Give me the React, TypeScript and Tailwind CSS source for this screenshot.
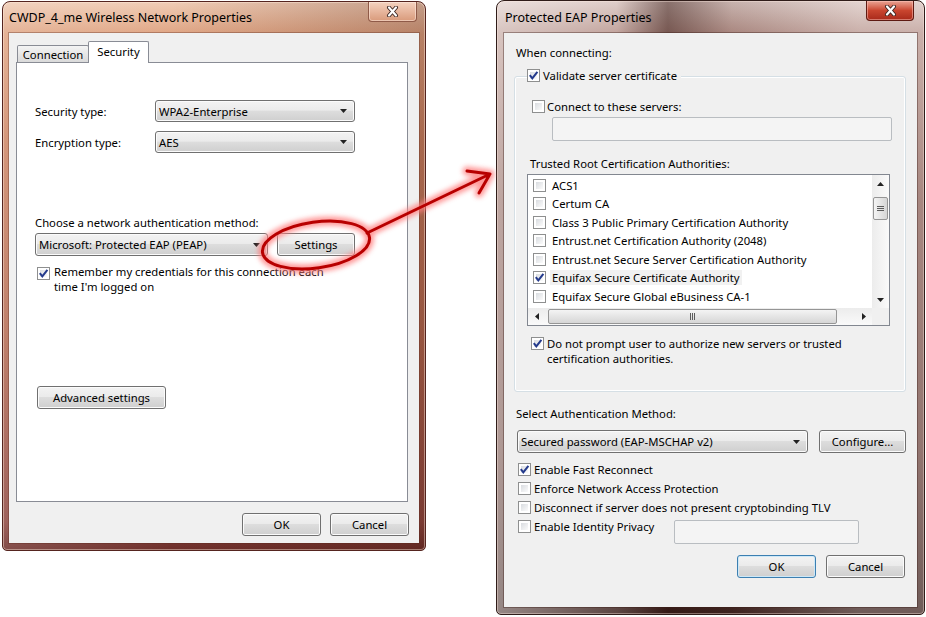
import type { ReactNode } from "react";

const face = "font-['Noto_Sans','Open_Sans',sans-serif]";
const btnFill =
  "bg-[linear-gradient(180deg,#f3f3f3_0%,#ebebeb_46%,#dddddd_50%,#cfcfcf_100%)]";

function Check({ on = false }: { on?: boolean }) {
  return (
    <span className="relative inline-block h-[13px] w-[13px] shrink-0 border border-[#8e8f8f] bg-white">
      <span className="absolute inset-[2px] bg-linear-to-br from-[#d9dce0] to-[#fbfbfb]" />
      {on && (
        <svg viewBox="0 0 11 11" className="absolute inset-0 h-[11px] w-[11px]">
          <path d="M1.8 5.2 4.3 8.4 9.4 1.8" fill="none" stroke="#243a8c" strokeWidth="2" />
        </svg>
      )}
    </span>
  );
}

function Btn({ children, className = "", primary = false }: { children: ReactNode; className?: string; primary?: boolean }) {
  return (
    <div
      className={`flex h-[23px] items-center justify-center rounded-[3px] border ${btnFill} ${
        primary
          ? "border-[#3c7fb1] shadow-[inset_0_0_0_1px_#cde8f7]"
          : "border-[#707070] shadow-[inset_0_0_0_1px_#fbfbfb]"
      } ${className}`}
    >
      {children}
    </div>
  );
}

function Arrow({ dir }: { dir: "up" | "down" | "left" | "right" }) {
  const d = {
    up: "M0 4h7L3.5 0z",
    down: "M0 0h7L3.5 4z",
    left: "M4 0v7L0 3.5z",
    right: "M0 0v7L4 3.5z",
  }[dir];
  const vert = dir === "up" || dir === "down";
  return (
    <svg width={vert ? 7 : 4} height={vert ? 4 : 7} viewBox={vert ? "0 0 7 4" : "0 0 4 7"}>
      <path d={d} fill="#222" />
    </svg>
  );
}

function Combo({ value, className = "" }: { value: string; className?: string }) {
  return (
    <div
      className={`flex items-center justify-between rounded-[3px] border border-[#707070] ${btnFill} shadow-[inset_0_0_0_1px_#fbfbfb] pl-[3px] pr-[7px] ${className}`}
    >
      <span>{value}</span>
      <Arrow dir="down" />
    </div>
  );
}

function TextBox({ className = "" }: { className?: string }) {
  return <div className={`rounded-[2px] border border-[#b9bdc1] bg-[#f4f4f4] ${className}`} />;
}

function CloseX() {
  return (
    <svg width="13" height="11" viewBox="0 0 13 11">
      <path d="M3 1.5l7 8M10 1.5l-7 8" stroke="#3b2622" strokeWidth="4" strokeLinecap="round" />
      <path d="M3 1.5l7 8M10 1.5l-7 8" stroke="#fff" strokeWidth="2.2" strokeLinecap="round" />
    </svg>
  );
}

function Grip({ vertical }: { vertical?: boolean }) {
  return (
    <div className={`flex gap-px ${vertical ? "flex-col" : "flex-row"}`}>
      {[0, 1, 2].map((i) => (
        <span key={i} className={`${vertical ? "h-px w-[7px]" : "h-[7px] w-px"} bg-[#5c5c5c]`} />
      ))}
    </div>
  );
}

const authorities: [string, boolean][] = [
  ["ACS1", false],
  ["Certum CA", false],
  ["Class 3 Public Primary Certification Authority", false],
  ["Entrust.net Certification Authority (2048)", false],
  ["Entrust.net Secure Server Certification Authority", false],
  ["Equifax Secure Certificate Authority", true],
  ["Equifax Secure Global eBusiness CA-1", false],
];

function CertList() {
  return (
    <div className="flex h-[152px] w-[363px] flex-col border border-[#828790] bg-white">
      <div className="flex flex-1 overflow-hidden">
        <div className="flex-1 pl-[5px] pt-px">
          {authorities.map(([name, on]) => (
            <div key={name} className="flex h-[18.5px] items-center gap-[4px] whitespace-nowrap">
              <Check on={on} />
              <span className={`px-[2px] ${on ? "bg-[#f1f1f1]" : ""}`}>{name}</span>
            </div>
          ))}
        </div>
        {/* vertical scrollbar */}
        <div className="flex w-[17px] flex-col bg-linear-to-r from-[#ececec] to-[#fafafa]">
          <div className="flex h-[17px] items-center justify-center">
            <Arrow dir="up" />
          </div>
          <div className="mx-px mt-[5px] flex h-[23px] items-center justify-center rounded-[2px] border border-[#959595] bg-linear-to-r from-[#f4f4f4] to-[#d6d6d6]">
            <Grip vertical />
          </div>
          <div className="flex-1" />
          <div className="flex h-[17px] items-center justify-center">
            <Arrow dir="down" />
          </div>
        </div>
      </div>
      {/* horizontal scrollbar */}
      <div className="flex h-[17px]">
        <div className="flex flex-1 items-center bg-linear-to-b from-[#ececec] to-[#fafafa]">
          <div className="flex w-[17px] justify-center">
            <Arrow dir="left" />
          </div>
          <div className="ml-[3px] flex h-[15px] w-[289px] items-center justify-center rounded-[2px] border border-[#959595] bg-linear-to-b from-[#f4f4f4] to-[#d6d6d6]">
            <Grip />
          </div>
          <div className="flex-1" />
          <div className="flex w-[17px] justify-center">
            <Arrow dir="right" />
          </div>
        </div>
        <div className="w-[17px] bg-[#f0f0f0]" />
      </div>
    </div>
  );
}

function WirelessProperties() {
  return (
    <div className="mt-px flex h-[550px] w-[424px] flex-col rounded-t-[8px] rounded-b-[5px] border border-[#55241f] bg-[linear-gradient(90deg,rgba(255,255,255,0.15)_0%,transparent_40%,rgba(60,20,10,0.25)_100%),linear-gradient(180deg,#f0ccb5_0px,#e0a584_32px,#cc8464_140px,#b46a52_330px,#8e4740_520px,#6a2c28_550px)] px-[6px] pb-[7px] shadow-[inset_0_0_0_1px_rgba(255,235,220,0.45)]">
      <div className="flex h-[31px] items-start justify-between">
        <span className="pt-[7px] text-[12.5px] leading-[17px]">CWDP_4_me Wireless Network Properties</span>
        <div className="mr-[2px] flex h-[20px] w-[49px] items-center justify-center rounded-b-[4px] border border-t-0 border-[#8f5a48] bg-linear-to-b from-[#f4d2bf] to-[#d99a7b] shadow-[inset_0_0_0_1px_rgba(255,240,230,0.5)]">
          <CloseX />
        </div>
      </div>

      <div className="flex flex-1 flex-col bg-[#f0f0f0] pl-[7px] pt-[8px] shadow-[0_0_0_1px_rgba(90,40,30,0.35)]">
        {/* tab strip */}
        <div className="flex h-[21px] items-end">
          <div className="ml-px flex h-[17px] w-[72px] items-center justify-center rounded-t-[2px] border border-b-0 border-[#898c95] bg-linear-to-b from-[#f4f4f4] to-[#dadada]">
            Connection
          </div>
          <div className="relative z-10 -mb-px -ml-px flex h-[22px] w-[61px] justify-center rounded-t-[2px] border border-b-0 border-[#898c95] bg-white pt-[2px]">
            Security
          </div>
        </div>

        <div className="h-[440px] w-[392px] border border-[#898c95] bg-white">
          <div className="flex flex-col pl-[18px] pt-[37px]">
            <div className="flex h-[22px] items-center">
              <span className="w-[120px]">Security type:</span>
              <Combo value="WPA2-Enterprise" className="h-[22px] w-[200px]" />
            </div>
            <div className="mt-[9px] flex h-[22px] items-center">
              <span className="w-[120px]">Encryption type:</span>
              <Combo value="AES" className="h-[22px] w-[200px]" />
            </div>

            <span className="mt-[62px]">Choose a network authentication method:</span>
            <div className="mt-[3px] flex gap-[9px]">
              <Combo value="Microsoft: Protected EAP (PEAP)" className="h-[23px] w-[233px]" />
              <Btn className="w-[78px]">Settings</Btn>
            </div>

            <div className="ml-[2px] mt-[8px] flex items-start gap-[4px]">
              <span className="mt-[3px]">
                <Check on />
              </span>
              <span>
                Remember my credentials for this connection each
                <br />
                time I'm logged on
              </span>
            </div>

            <Btn className="ml-[2px] mt-[92px] w-[129px]">Advanced settings</Btn>
          </div>
        </div>

        <div className="mt-[11px] flex justify-end gap-[9px] pr-[10px]">
          <Btn className="w-[79px]">OK</Btn>
          <Btn className="w-[79px]">Cancel</Btn>
        </div>
      </div>
    </div>
  );
}

function PeapProperties() {
  return (
    <div className="flex h-[615px] w-[429px] flex-col rounded-t-[8px] rounded-b-[5px] border border-[#2f1c19] bg-[linear-gradient(90deg,rgba(255,255,255,0.45)_0%,rgba(255,255,255,0.15)_28%,rgba(40,12,8,0.45)_40%,rgba(40,12,8,0.1)_55%,rgba(255,255,255,0.25)_85%),linear-gradient(180deg,#dac6c1_0px,#b8958d_32px,#8a5f56_200px,#6e4740_450px,#3f2521_615px)] px-[7px] pb-[7px] shadow-[inset_0_0_0_1px_rgba(255,235,225,0.4)]">
      <div className="flex h-[32px] items-start justify-between">
        <span className="ml-px pt-[8px] text-[12.5px] leading-[17px]">Protected EAP Properties</span>
        <div className="mr-[3px] flex h-[20px] w-[48px] items-center justify-center rounded-b-[4px] border border-t-0 border-[#5e1a12] bg-linear-to-b from-[#e9a394] via-[#c9452f] to-[#a8291a] shadow-[inset_0_0_0_1px_rgba(255,200,190,0.5)]">
          <CloseX />
        </div>
      </div>

      <div className="flex flex-1 flex-col bg-[#f0f0f0] pl-[10px] pt-[12px] shadow-[0_0_0_1px_rgba(60,30,25,0.4)]">
        <span className="ml-[2px]">When connecting:</span>

        <div className="relative mt-[16px] h-[316px] w-[392px] rounded-[3px] border border-[#d5dfe5] shadow-[inset_0_0_0_1px_#fff]">
          <div className="absolute left-[12px] top-[-9px] flex items-center gap-[3px] bg-[#f0f0f0] pr-[4px]">
            <Check on />
            <span>Validate server certificate</span>
          </div>

          <div className="flex flex-col pl-[12px] pt-[23px]">
            <div className="ml-[5px] flex h-[13px] items-center gap-[2px]">
              <Check />
              <span>Connect to these servers:</span>
            </div>
            <TextBox className="ml-[25px] mt-[4px] h-[24px] w-[340px]" />

            <span className="ml-[3px] mt-[14.5px]">Trusted Root Certification Authorities:</span>
            <div className="mt-[3.5px]">
              <CertList />
            </div>

            <div className="ml-[4px] mt-[9.5px] flex items-start gap-[3px]">
              <span className="mt-[1.5px]">
                <Check on />
              </span>
              <span>
                Do not prompt user to authorize new servers or trusted
                <br />
                certification authorities.
              </span>
            </div>
          </div>
        </div>

        <span className="ml-[2px] mt-[13.5px]">Select Authentication Method:</span>
        <div className="ml-[3px] mt-[9.5px] flex gap-[11px]">
          <Combo value="Secured password (EAP-MSCHAP v2)" className="h-[23px] w-[291px]" />
          <Btn className="w-[87px]">Configure...</Btn>
        </div>

        <div className="ml-[4px] mt-[6.5px] flex flex-col">
          <div className="flex h-[19px] items-center gap-[3px]">
            <Check on />
            <span>Enable Fast Reconnect</span>
          </div>
          <div className="flex h-[19px] items-center gap-[3px]">
            <Check />
            <span>Enforce Network Access Protection</span>
          </div>
          <div className="flex h-[19px] items-center gap-[3px]">
            <Check />
            <span>Disconnect if server does not present cryptobinding TLV</span>
          </div>
          <div className="flex">
            <div className="flex h-[19px] w-[156px] items-center gap-[3px]">
              <Check />
              <span>Enable Identity Privacy</span>
            </div>
            <TextBox className="mt-[3.5px] h-[24px] w-[185px]" />
          </div>
        </div>

        <div className="mt-[11px] flex gap-[10px] pl-[223px]">
          <Btn primary className="w-[79px]">
            OK
          </Btn>
          <Btn className="w-[79px]">Cancel</Btn>
        </div>
      </div>
    </div>
  );
}

// red callout: ring round the Settings button and an arrow to the second dialog
function Callout() {
  const shaft = "M367 233 L490 174 M490 174 L467 171 M490 174 L479 193";
  return (
    <svg className="pointer-events-none absolute inset-0" width="926" height="617" viewBox="0 0 926 617">
      <defs>
        <filter id="glow" x="-20%" y="-20%" width="140%" height="140%">
          <feGaussianBlur stdDeviation="2.6" />
        </filter>
      </defs>
      <g fill="none" strokeLinecap="round" strokeLinejoin="round">
        <g filter="url(#glow)" stroke="#ff7f7f" strokeWidth="9" opacity="0.8">
          <ellipse cx="316" cy="245" rx="54" ry="23" transform="rotate(-8 316 245)" />
          <path d={shaft} />
        </g>
        <g stroke="#b80000" strokeWidth="3">
          <ellipse cx="316" cy="245" rx="54" ry="23" transform="rotate(-8 316 245)" />
          <path d={shaft} />
        </g>
      </g>
    </svg>
  );
}

export default function App() {
  return (
    <div className={`relative flex h-[617px] w-[926px] items-start gap-[70px] overflow-hidden bg-white pl-[2px] text-[11.3px] leading-[15px] text-black ${face}`}>
      <WirelessProperties />
      <PeapProperties />
      <Callout />
    </div>
  );
}
